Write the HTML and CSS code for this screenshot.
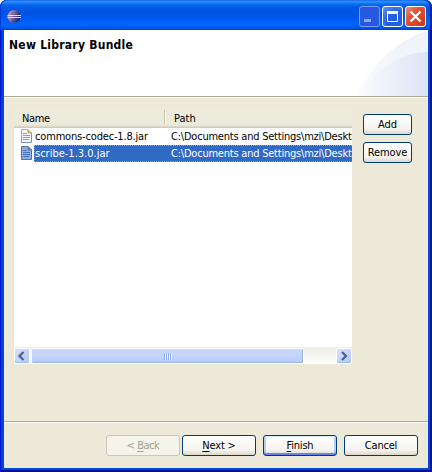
FILE: index.html
```html
<!DOCTYPE html>
<html lang="en">
<head>
<meta charset="utf-8">
<title>New Library Bundle</title>
<link rel="stylesheet" href="styles.css">
</head>
<body>
<div class="window">
  <div class="titlebar">
    <svg class="logo" width="14" height="14" viewBox="0 0 14 14">
      <defs><linearGradient id="ball" x1="0" y1="0" x2="1" y2="0.4"><stop offset="0" stop-color="#d3a5ad"/><stop offset=".4" stop-color="#8d78b0"/><stop offset="1" stop-color="#20206e"/></linearGradient></defs>
      <circle cx="7" cy="6.500" r="6.500" fill="url(#ball)"/>
      <path d="M.5 5.500h13.500M.5 7.500h13.500" stroke="#d8dcfa" stroke-width="1"/>
    </svg>
    <div class="controls">
      <div class="control minimize"><svg width="21" height="21"><path d="M5 13h7v3H5z" fill="#8ba7f5"/></svg></div>
      <div class="control"><svg width="21" height="21"><path d="M5.500 6v9.500h10V6" fill="none" stroke="#fff"/><path d="M5 5h11v3H5z" fill="#fff"/></svg></div>
      <div class="control close"><svg width="21" height="21"><path d="M5.500 5.500l10 10M15.500 5.500l-10 10" stroke="#fff" stroke-width="2.300"/></svg></div>
    </div>
  </div>
  <div class="client">
    <div class="banner">
      <h1>New Library Bundle</h1>
      <svg class="swoosh" width="72" height="66" viewBox="0 0 72 66">
        <defs>
          <linearGradient id="s1"><stop offset="0" stop-color="#fdfdfe"/><stop offset="1" stop-color="#e8edf8"/></linearGradient>
          <linearGradient id="s2"><stop offset="0" stop-color="#fafbfe"/><stop offset="1" stop-color="#dce3f5"/></linearGradient>
        </defs>
        <path d="M0 66C16 34 42 9 72 1V66z" fill="url(#s1)"/>
        <path d="M36 35C43 20 55 6 72 1V22C59 22 47 27 36 35z" fill="#f0f4fb"/>
        <path d="M4 66C20 39 44 22 72 22V66z" fill="url(#s2)"/>
      </svg>
    </div>
    <div class="content">
      <div class="table">
        <div class="head"><span class="name">Name</span><span class="path">Path</span></div>
        <div class="row">
          <svg class="file" width="13" height="14" viewBox="0 0 13 14"><path d="M1 .5h7l3.500 3.500v9.500H1z" fill="#f4f7fd"/><path d="M1.500 13V.5H8" fill="none" stroke="#c5ad68"/><path d="M1.500 8v5.500h10V4" fill="none" stroke="#7790bd"/><path d="M8 .5V4h3.500z" fill="#d9bd70" stroke="#bea668"/><path d="M3 4.500h4M3 6.500h7M3 8.500h7M3 10.500h6" stroke="#7f9dd3"/></svg>
          <span class="name">commons-codec-1.8.jar</span><span class="path">C:\Documents and Settings\mzi\Deskt</span>
        </div>
        <div class="row selected">
          <svg class="file" width="13" height="14" viewBox="0 0 13 14"><path d="M1.500 .5H8l3.500 3.500v9.500h-10z" fill="#8eafe3" stroke="#54719f"/><path d="M8 .5V4h3.500z" fill="#78866f" stroke="#6b7b85"/><path d="M3 4.500h4M3 6.500h7M3 8.500h7M3 10.500h6" stroke="#4973bd"/></svg>
          <span class="name">scribe-1.3.0.jar</span><span class="path">C:\Documents and Settings\mzi\Deskt</span>
        </div>
        <div class="space"></div>
        <div class="scrollbar">
          <div class="arrow"><svg width="16" height="16"><path d="M9.500 4L5.500 8l4 4" fill="none" stroke="#4d6185" stroke-width="2.200"/></svg></div>
          <div class="thumb"><i></i><i></i><i></i><i></i></div>
          <div class="arrow right"><svg width="16" height="16"><path d="M6 4l4 4-4 4" fill="none" stroke="#4d6185" stroke-width="2.200"/></svg></div>
        </div>
      </div>
      <div class="side">
        <button class="add">Add</button>
        <button class="remove">Remove</button>
      </div>
    </div>
    <div class="footer">
      <button class="back" disabled>&lt; <u>B</u>ack</button>
      <button class="next"><u>N</u>ext &gt;</button>
      <button class="finish"><u>F</u>inish</button>
      <button class="cancel">Cancel</button>
    </div>
  </div>
</div>
</body>
</html>
```
FILE: styles.css
```css
* { box-sizing: border-box; }
body { margin: 0; background: #fff; font: 11px/17px "DejaVu Sans Condensed", "DejaVu Sans", sans-serif; font-stretch: condensed; color: #000; }
svg { display: block; flex: none; }
.window { width: 432px; height: 472px; padding: 0 4px 4px; border-radius: 7px 7px 0 0; background: #0046e0; box-shadow: inset 1px 0 #0019cf, inset -2px 0 #00138c, inset 0 -2px #00138c, inset 2px 0 #0831d9; }
.titlebar { display: flex; height: 30px; margin: 0 -4px; padding: 6px 6px 0 7px; justify-content: space-between; border-radius: 7px 7px 0 0; background: linear-gradient(#0058e6 0, #3a8df5 1px, #278af8 2px, #0870f5 4px, #0058e6 7px, #0054e3 14px, #005cf2 20px, #0066ff 25px, #0054e6 28px, #0040c8 30px); box-shadow: inset 1px 0 #003bda, inset -2px 0 #0026a8; }
.logo { margin-top: 4px; }
.controls { display: flex; gap: 2px; }
.control { width: 21px; height: 21px; border: 1px solid #fff; border-radius: 3px; background: radial-gradient(circle at 80% 85%, #1d60e8, #2460e4 50%, #6690f0); }
.control svg { margin: -1px; }
.minimize { border-color: #7d9cf0; background: #2659df; }
.close { background: linear-gradient(135deg, #ef8c70, #e35030 40%, #c9380f); }
.client { height: 438px; background: #ece9d8; display: flex; flex-direction: column; }
.banner { display: flex; justify-content: space-between; height: 68px; flex: none; background: #fff; border-bottom: 1px solid #fff; box-shadow: inset 0 -1px #aca899; }
.banner h1 { margin: 7px 0 0 5px; font-size: 12px; line-height: 17px; font-weight: bold; letter-spacing: .26px; white-space: nowrap; }
.content { display: flex; height: 323px; gap: 11px; padding: 10px 0 0 10px; }
.table { width: 338px; height: 256px; display: flex; flex-direction: column; }
.head { height: 20px; display: flex; padding: 2px 0 2px 8px; line-height: 17px; background: linear-gradient(#ebeadb 17px, #e2dece 18px, #d6d2c2 19px, #cbc7b8); }
.head .name { width: 143px; height: 14px; border-right: 1px solid #c7c5b2; box-shadow: 1px 0 #fff; letter-spacing: -.4px; }
.head .path { padding-left: 9px; }
.row { height: 17px; display: flex; background: #fff; overflow: hidden; white-space: nowrap; }
.file { margin: 1px 1px 0 6px; }
.row .name { width: 137px; padding-left: 1px; flex: none; letter-spacing: -.17px; }
.row .path { flex: none; width: 181px; letter-spacing: -.22px; }
.selected .name, .selected .path { background: #316ac5; color: #fff; line-height: 15px; border: dotted #cf953a; border-width: 1px 0; }
.selected .name { border-left-width: 1px; padding: 0; letter-spacing: 0; }
.space { flex: 1; background: #fff; }
.scrollbar { height: 17px; display: flex; gap: 1px; padding-top: 1px; background: linear-gradient(#eeede5, #fefefb); }
.arrow { width: 16px; height: 16px; border: 1px solid #fff; border-radius: 2px; background: linear-gradient(135deg, #d6e1ff, #b0c7f8); box-shadow: inset 0 -1px #9eb9ed; }
.arrow svg { margin: -1px; }
.right { margin-left: auto; }
.thumb { width: 273px; height: 16px; display: flex; justify-content: center; align-items: center; gap: 1px; border: 1px solid #fff; border-radius: 2px; background: linear-gradient(#cad8fd, #c2d2fc 65%, #b4c8f6); box-shadow: inset -1px -1px #98b3e6; }
.thumb i { width: 1px; height: 7px; background: #8cb0f8; box-shadow: 1px 0 #eef4fe; }
.side { display: flex; flex-direction: column; gap: 7px; padding-top: 6px; }
button { height: 21px; padding: 1px 0 0; border: 1px solid #003c74; border-radius: 3px; background: linear-gradient(#fff, #f4f3ee 75%, #dcd7cb); font: inherit; line-height: 18px; color: #000; white-space: nowrap; }
.side button { width: 49px; }
.remove { letter-spacing: -.1px; }
.footer { flex: 1; display: flex; border-top: 1px solid #aca899; box-shadow: inset 0 1px #fff; padding: 13px 0 0 102px; }
.footer button { width: 74px; letter-spacing: -.2px; }
.footer .back { letter-spacing: -.45px; }
.next { margin-left: 2px; }
.finish, .cancel { margin-left: 7px; }
.finish { box-shadow: inset 0 1px #cee7ff, inset 0 -2px #6982ee, inset 2px 0 #b5cef5, inset -2px 0 #b5cef5; }
.back:disabled { border-color: #c9c7ba; background: #f5f4ea; color: #a1a192; }
u { text-underline-offset: 2px; text-decoration-thickness: 1px; text-decoration-skip-ink: none; }
```
